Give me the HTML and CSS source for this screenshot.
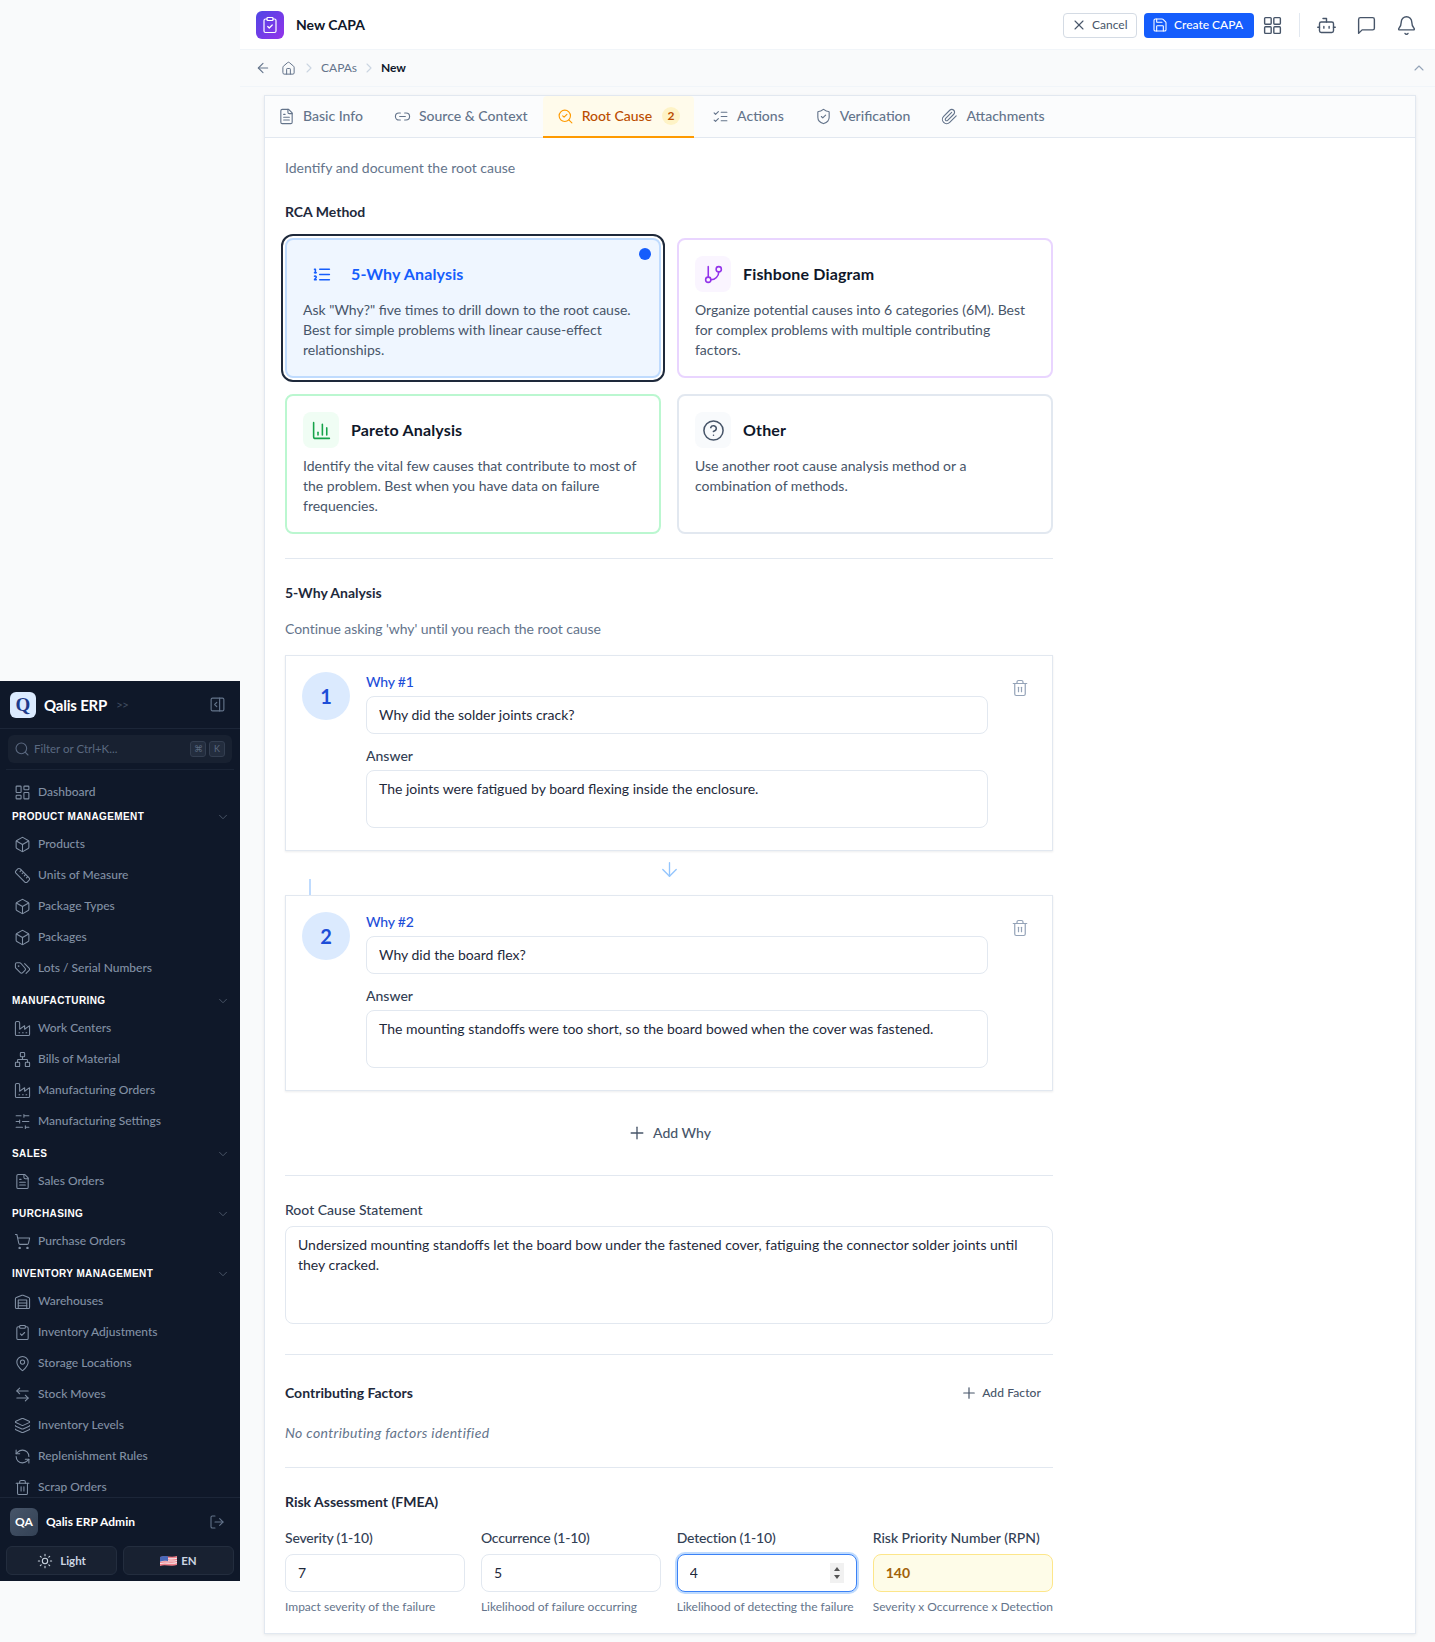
FILE: index.html
```html
<!DOCTYPE html>
<html lang="en">
<head>
<meta charset="UTF-8">
<meta name="viewport" content="width=device-width, initial-scale=1.0">
<title>New CAPA</title>
<link rel="stylesheet" href="styles.css">
</head>
<body>
<!-- icon sprite -->
<svg class="sprite" xmlns="http://www.w3.org/2000/svg">
  <symbol id="i-dashboard" viewBox="0 0 24 24"><rect x="3" y="3" width="7" height="9" rx="1"/><rect x="14" y="3" width="7" height="5" rx="1"/><rect x="14" y="12" width="7" height="9" rx="1"/><rect x="3" y="16" width="7" height="5" rx="1"/></symbol>
  <symbol id="i-box" viewBox="0 0 24 24"><path d="M21 8a2 2 0 0 0-1-1.73l-7-4a2 2 0 0 0-2 0l-7 4A2 2 0 0 0 3 8v8a2 2 0 0 0 1 1.73l7 4a2 2 0 0 0 2 0l7-4A2 2 0 0 0 21 16Z"/><path d="m3.3 7 8.7 5 8.7-5"/><path d="M12 22V12"/></symbol>
  <symbol id="i-ruler" viewBox="0 0 24 24"><path d="M21.3 15.3a2.4 2.4 0 0 1 0 3.4l-2.6 2.6a2.4 2.4 0 0 1-3.4 0L2.7 8.7a2.4 2.4 0 0 1 0-3.4l2.6-2.6a2.4 2.4 0 0 1 3.4 0Z"/><path d="m14.5 12.5 2-2"/><path d="m11.5 9.5 2-2"/><path d="m8.5 6.5 2-2"/><path d="m17.5 15.5 2-2"/></symbol>
  <symbol id="i-tags" viewBox="0 0 24 24"><path d="m15 5 6.3 6.3a2.4 2.4 0 0 1 0 3.4L17 19"/><path d="M9.6 4.6A2 2 0 0 0 8.2 4H4a2 2 0 0 0-2 2v4.2a2 2 0 0 0 .6 1.4l6.3 6.3a2.4 2.4 0 0 0 3.4 0l3.2-3.2a2.4 2.4 0 0 0 0-3.4Z"/><circle cx="6.5" cy="8.5" r=".5"/></symbol>
  <symbol id="i-factory" viewBox="0 0 24 24"><path d="M2 20a2 2 0 0 0 2 2h16a2 2 0 0 0 2-2V8l-7 5V8l-7 5V4a2 2 0 0 0-2-2H4a2 2 0 0 0-2 2Z"/><path d="M17 18h1"/><path d="M12 18h1"/><path d="M7 18h1"/></symbol>
  <symbol id="i-network" viewBox="0 0 24 24"><rect x="16" y="16" width="6" height="6" rx="1"/><rect x="2" y="16" width="6" height="6" rx="1"/><rect x="9" y="2" width="6" height="6" rx="1"/><path d="M5 16v-3a1 1 0 0 1 1-1h12a1 1 0 0 1 1 1v3"/><path d="M12 12V8"/></symbol>
  <symbol id="i-sliders" viewBox="0 0 24 24"><path d="M21 4h-7M10 4H3M21 12h-9M8 12H3M21 20h-5M12 20H3M14 2v4M8 10v4M16 18v4"/></symbol>
  <symbol id="i-file" viewBox="0 0 24 24"><path d="M15 2H6a2 2 0 0 0-2 2v16a2 2 0 0 0 2 2h12a2 2 0 0 0 2-2V7Z"/><path d="M14 2v4a2 2 0 0 0 2 2h4"/><path d="M10 9H8"/><path d="M16 13H8"/><path d="M16 17H8"/></symbol>
  <symbol id="i-cart" viewBox="0 0 24 24"><circle cx="8" cy="21" r="1"/><circle cx="19" cy="21" r="1"/><path d="M2.05 2.05h2l2.66 12.42a2 2 0 0 0 2 1.58h9.78a2 2 0 0 0 1.95-1.57l1.65-7.43H5.12"/></symbol>
  <symbol id="i-warehouse" viewBox="0 0 24 24"><path d="M22 8.35V20a2 2 0 0 1-2 2H4a2 2 0 0 1-2-2V8.35A2 2 0 0 1 3.26 6.5l8-3.2a2 2 0 0 1 1.48 0l8 3.2A2 2 0 0 1 22 8.35Z"/><path d="M6 18h12"/><path d="M6 14h12"/><rect x="6" y="10" width="12" height="12"/></symbol>
  <symbol id="i-clipcheck" viewBox="0 0 24 24"><rect x="8" y="2" width="8" height="4" rx="1"/><path d="M16 4h2a2 2 0 0 1 2 2v14a2 2 0 0 1-2 2H6a2 2 0 0 1-2-2V6a2 2 0 0 1 2-2h2"/><path d="m9 14 2 2 4-4"/></symbol>
  <symbol id="i-pin" viewBox="0 0 24 24"><path d="M20 10c0 5-5.5 10.2-7.4 11.8a1 1 0 0 1-1.2 0C9.5 20.2 4 15 4 10a8 8 0 0 1 16 0"/><circle cx="12" cy="10" r="3"/></symbol>
  <symbol id="i-swap" viewBox="0 0 24 24"><path d="M8 3 4 7l4 4"/><path d="M4 7h16"/><path d="m16 21 4-4-4-4"/><path d="M20 17H4"/></symbol>
  <symbol id="i-layers" viewBox="0 0 24 24"><path d="M12.83 2.18a2 2 0 0 0-1.66 0L2.6 6.08a1 1 0 0 0 0 1.83l8.58 3.91a2 2 0 0 0 1.66 0l8.58-3.9a1 1 0 0 0 0-1.83Z"/><path d="M2 12a1 1 0 0 0 .58.91l8.6 3.91a2 2 0 0 0 1.65 0l8.58-3.9A1 1 0 0 0 22 12"/><path d="M2 17a1 1 0 0 0 .58.91l8.6 3.91a2 2 0 0 0 1.65 0l8.58-3.9A1 1 0 0 0 22 17"/></symbol>
  <symbol id="i-refresh" viewBox="0 0 24 24"><path d="M21 12a9 9 0 0 0-9-9 9.75 9.75 0 0 0-6.74 2.74L3 8"/><path d="M3 3v5h5"/><path d="M3 12a9 9 0 0 0 9 9 9.75 9.75 0 0 0 6.74-2.74L21 16"/><path d="M16 16h5v5"/></symbol>
  <symbol id="i-trash" viewBox="0 0 24 24"><path d="M3 6h18"/><path d="M19 6v14a2 2 0 0 1-2 2H7a2 2 0 0 1-2-2V6"/><path d="M8 6V4a2 2 0 0 1 2-2h4a2 2 0 0 1 2 2v2"/><path d="M10 11v6"/><path d="M14 11v6"/></symbol>
  <symbol id="i-chev-down" viewBox="0 0 24 24"><path d="m6 9 6 6 6-6"/></symbol>
  <symbol id="i-chev-right" viewBox="0 0 24 24"><path d="m9 18 6-6-6-6"/></symbol>
  <symbol id="i-chev-up" viewBox="0 0 24 24"><path d="m18 15-6-6-6 6"/></symbol>
  <symbol id="i-search" viewBox="0 0 24 24"><circle cx="11" cy="11" r="8"/><path d="m21 21-4.3-4.3"/></symbol>
  <symbol id="i-panel" viewBox="0 0 24 24"><rect x="3" y="3" width="18" height="18" rx="2"/><path d="M15 3v18"/><path d="m10 15-3-3 3-3" transform="translate(1 0)"/></symbol>
  <symbol id="i-logout" viewBox="0 0 24 24"><path d="M9 21H5a2 2 0 0 1-2-2V5a2 2 0 0 1 2-2h4"/><path d="m16 17 5-5-5-5"/><path d="M21 12H9"/></symbol>
  <symbol id="i-sun" viewBox="0 0 24 24"><circle cx="12" cy="12" r="4"/><path d="M12 2v2M12 20v2M4.93 4.93l1.41 1.41M17.66 17.66l1.41 1.41M2 12h2M20 12h2M6.34 17.66l-1.41 1.41M19.07 4.93l-1.41 1.41"/></symbol>
  <symbol id="i-x" viewBox="0 0 24 24"><path d="M18 6 6 18"/><path d="m6 6 12 12"/></symbol>
  <symbol id="i-save" viewBox="0 0 24 24"><path d="M15.2 3a2 2 0 0 1 1.4.6l3.8 3.8a2 2 0 0 1 .6 1.4V19a2 2 0 0 1-2 2H5a2 2 0 0 1-2-2V5a2 2 0 0 1 2-2z"/><path d="M17 21v-7a1 1 0 0 0-1-1H8a1 1 0 0 0-1 1v7"/><path d="M7 3v4a1 1 0 0 0 1 1h7"/></symbol>
  <symbol id="i-grid" viewBox="0 0 24 24"><rect x="3" y="3" width="7.5" height="7.5" rx="1"/><rect x="13.5" y="3" width="7.5" height="7.5" rx="1"/><rect x="3" y="13.5" width="7.5" height="7.5" rx="1"/><rect x="13.5" y="13.5" width="7.5" height="7.5" rx="1"/></symbol>
  <symbol id="i-bot" viewBox="0 0 24 24"><path d="M12 8V4H8"/><rect x="4" y="8" width="16" height="12" rx="2"/><path d="M2 14h2M20 14h2M15 13v2M9 13v2"/></symbol>
  <symbol id="i-chat" viewBox="0 0 24 24"><path d="M21 15a2 2 0 0 1-2 2H7l-4 4V5a2 2 0 0 1 2-2h14a2 2 0 0 1 2 2z"/></symbol>
  <symbol id="i-bell" viewBox="0 0 24 24"><path d="M10.27 21a2 2 0 0 0 3.46 0"/><path d="M3.26 15.33A1 1 0 0 0 4 17h16a1 1 0 0 0 .74-1.67C19.41 13.96 18 12.5 18 8A6 6 0 0 0 6 8c0 4.5-1.41 5.96-2.74 7.33"/></symbol>
  <symbol id="i-back" viewBox="0 0 24 24"><path d="m12 19-7-7 7-7"/><path d="M19 12H5"/></symbol>
  <symbol id="i-home" viewBox="0 0 24 24"><path d="M15 21v-8a1 1 0 0 0-1-1h-4a1 1 0 0 0-1 1v8"/><path d="M3 10a2 2 0 0 1 .71-1.53l7-6a2 2 0 0 1 2.58 0l7 6A2 2 0 0 1 21 10v9a2 2 0 0 1-2 2H5a2 2 0 0 1-2-2z"/></symbol>
  <symbol id="i-link" viewBox="0 0 24 24"><path d="M9 17H7A5 5 0 0 1 7 7h2"/><path d="M15 7h2a5 5 0 1 1 0 10h-2"/><path d="M8 12h8"/></symbol>
  <symbol id="i-searchcheck" viewBox="0 0 24 24"><path d="m8 11 2 2 4-4"/><circle cx="11" cy="11" r="8"/><path d="m21 21-4.3-4.3"/></symbol>
  <symbol id="i-listcheck" viewBox="0 0 24 24"><path d="m3 17 2 2 4-4"/><path d="m3 7 2 2 4-4"/><path d="M13 6h8"/><path d="M13 12h8"/><path d="M13 18h8"/></symbol>
  <symbol id="i-shield" viewBox="0 0 24 24"><path d="M20 13c0 5-3.5 7.5-7.66 8.95a1 1 0 0 1-.67-.01C7.5 20.5 4 18 4 13V6a1 1 0 0 1 1-1c2 0 4.5-1.2 6.24-2.72a1.17 1.17 0 0 1 1.52 0C14.51 3.81 17 5 19 5a1 1 0 0 1 1 1z"/><path d="m9 12 2 2 4-4"/></symbol>
  <symbol id="i-clip" viewBox="0 0 24 24"><path d="m21.44 11.05-9.19 9.19a6 6 0 0 1-8.49-8.49l8.57-8.57A4 4 0 1 1 18 8.84l-8.59 8.57a2 2 0 0 1-2.83-2.83l8.49-8.48"/></symbol>
  <symbol id="i-listnum" viewBox="0 0 24 24"><path d="M10 12h11"/><path d="M10 18h11"/><path d="M10 6h11"/><path d="M4 10h2"/><path d="M4 6h1v4"/><path d="M6 18H4c0-1 2-2 2-3s-1-1.5-2-1"/></symbol>
  <symbol id="i-branch" viewBox="0 0 24 24"><path d="M6 3v12"/><circle cx="18" cy="6" r="3"/><circle cx="6" cy="18" r="3"/><path d="M18 9a9 9 0 0 1-9 9"/></symbol>
  <symbol id="i-chart" viewBox="0 0 24 24"><path d="M3 3v16a2 2 0 0 0 2 2h16"/><path d="M18 17V9"/><path d="M13 17V5"/><path d="M8 17v-3"/></symbol>
  <symbol id="i-help" viewBox="0 0 24 24"><circle cx="12" cy="12" r="10"/><path d="M9.09 9a3 3 0 0 1 5.83 1c0 2-3 3-3 3"/><path d="M12 17h.01"/></symbol>
  <symbol id="i-arrow-down" viewBox="0 0 24 24"><path d="M12 5v14"/><path d="m19 12-7 7-7-7"/></symbol>
  <symbol id="i-plus" viewBox="0 0 24 24"><path d="M5 12h14"/><path d="M12 5v14"/></symbol>
</svg>

<div class="app">
  <div class="rail">
    <aside class="sidebar">
      <div class="side-top">
        <span class="brand-mark">Q</span>
        <span class="brand-name">Qalis ERP</span>
        <span class="brand-more">&gt;&gt;</span>
        <svg class="ic side-collapse"><use href="#i-panel"/></svg>
      </div>
      <div class="side-search">
        <div class="filter">
          <svg class="ic filter-icon"><use href="#i-search"/></svg>
          <span class="filter-text">Filter or Ctrl+K...</span>
          <kbd>⌘</kbd><kbd>K</kbd>
        </div>
      </div>
      <nav class="side-nav">
        <a class="nav-item"><svg class="ic"><use href="#i-dashboard"/></svg>Dashboard</a>
        <div class="nav-group">
          <div class="nav-head">Product Management<svg class="ic"><use href="#i-chev-down"/></svg></div>
          <a class="nav-item"><svg class="ic"><use href="#i-box"/></svg>Products</a>
          <a class="nav-item"><svg class="ic"><use href="#i-ruler"/></svg>Units of Measure</a>
          <a class="nav-item"><svg class="ic"><use href="#i-box"/></svg>Package Types</a>
          <a class="nav-item"><svg class="ic"><use href="#i-box"/></svg>Packages</a>
          <a class="nav-item"><svg class="ic"><use href="#i-tags"/></svg>Lots / Serial Numbers</a>
        </div>
        <div class="nav-group">
          <div class="nav-head">Manufacturing<svg class="ic"><use href="#i-chev-down"/></svg></div>
          <a class="nav-item"><svg class="ic"><use href="#i-factory"/></svg>Work Centers</a>
          <a class="nav-item"><svg class="ic"><use href="#i-network"/></svg>Bills of Material</a>
          <a class="nav-item"><svg class="ic"><use href="#i-factory"/></svg>Manufacturing Orders</a>
          <a class="nav-item"><svg class="ic"><use href="#i-sliders"/></svg>Manufacturing Settings</a>
        </div>
        <div class="nav-group">
          <div class="nav-head">Sales<svg class="ic"><use href="#i-chev-down"/></svg></div>
          <a class="nav-item"><svg class="ic"><use href="#i-file"/></svg>Sales Orders</a>
        </div>
        <div class="nav-group">
          <div class="nav-head">Purchasing<svg class="ic"><use href="#i-chev-down"/></svg></div>
          <a class="nav-item"><svg class="ic"><use href="#i-cart"/></svg>Purchase Orders</a>
        </div>
        <div class="nav-group">
          <div class="nav-head">Inventory Management<svg class="ic"><use href="#i-chev-down"/></svg></div>
          <a class="nav-item"><svg class="ic"><use href="#i-warehouse"/></svg>Warehouses</a>
          <a class="nav-item"><svg class="ic"><use href="#i-clipcheck"/></svg>Inventory Adjustments</a>
          <a class="nav-item"><svg class="ic"><use href="#i-pin"/></svg>Storage Locations</a>
          <a class="nav-item"><svg class="ic"><use href="#i-swap"/></svg>Stock Moves</a>
          <a class="nav-item"><svg class="ic"><use href="#i-layers"/></svg>Inventory Levels</a>
          <a class="nav-item"><svg class="ic"><use href="#i-refresh"/></svg>Replenishment Rules</a>
          <a class="nav-item"><svg class="ic"><use href="#i-trash"/></svg>Scrap Orders</a>
        </div>
      </nav>
      <div class="side-foot">
        <div class="user-row">
          <span class="avatar">QA</span>
          <span class="user-name">Qalis ERP Admin</span>
          <svg class="ic user-out"><use href="#i-logout"/></svg>
        </div>
        <div class="foot-btns">
          <button class="foot-btn"><svg class="ic"><use href="#i-sun"/></svg>Light</button>
          <button class="foot-btn foot-btn-lang">
            <svg class="flag" viewBox="0 0 17 12"><path d="M0 2C5 0 11 3 17 1V10C11 12 5 9 0 11Z" fill="#ef7f8a"/><path d="M0 4.2C5 2.2 11 5.2 17 3.2M0 6.4C5 4.4 11 7.4 17 5.4M0 8.6C5 6.6 11 9.6 17 7.6" fill="none" stroke="#f5eded" stroke-width="1.1"/><path d="M0 2C3 .8 5.500 1 8 1.500V6.200C5.500 5.700 3 5.500 0 6.700Z" fill="#4a68b8"/></svg>EN
          </button>
        </div>
      </div>
    </aside>
  </div>

  <div class="main">
    <header class="topbar">
      <span class="page-mark"><svg class="ic"><use href="#i-clipcheck"/></svg></span>
      <span class="page-title">New CAPA</span>
      <div class="top-actions">
        <button class="btn btn-cancel"><svg class="ic"><use href="#i-x"/></svg>Cancel</button>
        <button class="btn btn-primary"><svg class="ic"><use href="#i-save"/></svg>Create CAPA</button>
        <svg class="ic top-icon top-grid"><use href="#i-grid"/></svg>
        <span class="top-sep"></span>
        <svg class="ic top-icon"><use href="#i-bot"/></svg>
        <svg class="ic top-icon"><use href="#i-chat"/></svg>
        <svg class="ic top-icon"><use href="#i-bell"/></svg>
      </div>
    </header>

    <div class="crumbs">
      <svg class="ic crumb-back"><use href="#i-back"/></svg>
      <svg class="ic crumb-home"><use href="#i-home"/></svg>
      <svg class="ic crumb-sep"><use href="#i-chev-right"/></svg>
      <span class="crumb">CAPAs</span>
      <svg class="ic crumb-sep"><use href="#i-chev-right"/></svg>
      <span class="crumb crumb-now">New</span>
      <svg class="ic crumb-up"><use href="#i-chev-up"/></svg>
    </div>

    <section class="sheet">
      <div class="tabs">
        <a class="tab"><svg class="ic"><use href="#i-file"/></svg>Basic Info</a>
        <a class="tab"><svg class="ic"><use href="#i-link"/></svg>Source &amp; Context</a>
        <a class="tab tab-active"><svg class="ic"><use href="#i-searchcheck"/></svg>Root Cause<span class="tab-count">2</span></a>
        <a class="tab"><svg class="ic"><use href="#i-listcheck"/></svg>Actions</a>
        <a class="tab"><svg class="ic"><use href="#i-shield"/></svg>Verification</a>
        <a class="tab"><svg class="ic"><use href="#i-clip"/></svg>Attachments</a>
      </div>

      <div class="form">
        <p class="muted intro">Identify and document the root cause</p>
        <h3 class="sec-title rca-title">RCA Method</h3>

        <div class="methods">
          <div class="method method-blue is-selected">
            <span class="method-dot"></span>
            <div class="method-head"><span class="method-icon"><svg class="ic"><use href="#i-listnum"/></svg></span><h4>5-Why Analysis</h4></div>
            <p>Ask "Why?" five times to drill down to the root cause. Best for simple problems with linear cause-effect relationships.</p>
          </div>
          <div class="method method-purple">
            <div class="method-head"><span class="method-icon"><svg class="ic"><use href="#i-branch"/></svg></span><h4>Fishbone Diagram</h4></div>
            <p>Organize potential causes into 6 categories (6M). Best for complex problems with multiple contributing factors.</p>
          </div>
          <div class="method method-green">
            <div class="method-head"><span class="method-icon"><svg class="ic"><use href="#i-chart"/></svg></span><h4>Pareto Analysis</h4></div>
            <p>Identify the vital few causes that contribute to most of the problem. Best when you have data on failure frequencies.</p>
          </div>
          <div class="method method-gray">
            <div class="method-head"><span class="method-icon"><svg class="ic"><use href="#i-help"/></svg></span><h4>Other</h4></div>
            <p>Use another root cause analysis method or a combination of methods.</p>
          </div>
        </div>

        <hr class="rule">
        <h3 class="sec-title why-title">5-Why Analysis</h3>
        <p class="muted why-sub">Continue asking 'why' until you reach the root cause</p>

        <div class="why">
          <span class="why-num">1</span>
          <div class="why-body">
            <label class="why-label">Why #1</label>
            <input class="field" type="text" value="Why did the solder joints crack?">
            <label class="field-label why-answer">Answer</label>
            <textarea class="field why-area">The joints were fatigued by board flexing inside the enclosure.</textarea>
          </div>
          <button class="why-del"><svg class="ic"><use href="#i-trash"/></svg></button>
        </div>
        <div class="why-link">
          <span class="why-tail"></span>
          <svg class="ic"><use href="#i-arrow-down"/></svg>
        </div>
        <div class="why">
          <span class="why-num">2</span>
          <div class="why-body">
            <label class="why-label">Why #2</label>
            <input class="field" type="text" value="Why did the board flex?">
            <label class="field-label why-answer">Answer</label>
            <textarea class="field why-area">The mounting standoffs were too short, so the board bowed when the cover was fastened.</textarea>
          </div>
          <button class="why-del"><svg class="ic"><use href="#i-trash"/></svg></button>
        </div>

        <div class="add-why"><button class="ghost"><svg class="ic"><use href="#i-plus"/></svg>Add Why</button></div>
        <hr class="rule">

        <label class="field-label root-label">Root Cause Statement</label>
        <textarea class="field root-area">Undersized mounting standoffs let the board bow under the fastened cover, fatiguing the connector solder joints until they cracked.</textarea>
        <hr class="rule root-rule">

        <div class="factor-row">
          <h3 class="sec-title">Contributing Factors</h3>
          <button class="ghost ghost-sm"><svg class="ic"><use href="#i-plus"/></svg>Add Factor</button>
        </div>
        <p class="muted factor-none">No contributing factors identified</p>
        <hr class="rule">

        <h3 class="sec-title risk-title">Risk Assessment (FMEA)</h3>
        <div class="risk">
          <div>
            <label class="field-label">Severity (1-10)</label>
            <input class="field" type="text" value="7">
            <p class="hint">Impact severity of the failure</p>
          </div>
          <div>
            <label class="field-label">Occurrence (1-10)</label>
            <input class="field" type="text" value="5">
            <p class="hint">Likelihood of failure occurring</p>
          </div>
          <div>
            <label class="field-label">Detection (1-10)</label>
            <div class="spin-wrap">
              <input class="field is-focus" type="text" value="4">
              <span class="spin"><i class="spin-up"></i><i class="spin-down"></i></span>
            </div>
            <p class="hint">Likelihood of detecting the failure</p>
          </div>
          <div>
            <label class="field-label field-label-rpn">Risk Priority Number (RPN)</label>
            <input class="field field-rpn" type="text" value="140" readonly>
            <p class="hint">Severity x Occurrence x Detection</p>
          </div>
        </div>
      </div>
    </section>
  </div>
</div>
</body>
</html>
```

FILE: styles.css
```css
* {
  box-sizing: border-box;
}
html, body {
  height: 1642px;
  overflow: hidden;
}
body {
  margin: 0;
  font-family: Lato, "Noto Sans", sans-serif;
  font-size: 14px;
  line-height: 20px;
  color: #1e293b;
  background-color: #f9fafb;
}
h3, h4, p {
  margin: 0;
}
button {
  font: inherit;
  cursor: pointer;
}
.sprite {
  display: none;
}
.ic {
  width: 16px;
  height: 16px;
  flex: none;
  fill: none;
  stroke: currentColor;
  stroke-width: 1.6;
  stroke-linecap: round;
  stroke-linejoin: round;
}
.app {
  display: flex;
}
.rail {
  width: 240px;
  flex: none;
  padding-top: 681px;
}

/* sidebar */
.sidebar {
  height: 900px;
  display: flex;
  flex-direction: column;
  background-color: #0f1829;
  color: #8290a4;
}
.side-top {
  height: 48px;
  flex: none;
  display: flex;
  align-items: center;
  padding: 0 14px 0 10px;
  border-bottom: 1px solid #1c2638;
}
.brand-mark {
  width: 26px;
  height: 26px;
  display: flex;
  align-items: center;
  justify-content: center;
  border-radius: 6px;
  background-color: #dbeafe;
  color: #1e3a8a;
  font-family: "Liberation Serif", serif;
  font-size: 19px;
  font-weight: 700;
}
.brand-name {
  margin-left: 8px;
  color: #fff;
  font-size: 15px;
  font-weight: 700;
  letter-spacing: -0.2px;
}
.brand-more {
  margin-left: 9px;
  color: #3f4b5e;
  font-size: 12px;
  letter-spacing: -1px;
}
.side-collapse {
  margin-left: auto;
  width: 17px;
  height: 17px;
  color: #64748b;
}
.side-search {
  flex: none;
  margin: 0 6px;
  padding: 6px 2px;
  border-bottom: 1px solid #1a2436;
}
.filter {
  height: 28px;
  display: flex;
  align-items: center;
  gap: 3px;
  padding: 0 7px 0 6px;
  border-radius: 6px;
  background-color: #182131;
  font-size: 11.500px;
  color: #5b6980;
}
.filter-icon {
  margin-right: 1px;
}
.filter-text {
  flex: 1;
}
kbd {
  width: 16px;
  height: 16px;
  display: flex;
  align-items: center;
  justify-content: center;
  border: 1px solid #333e50;
  border-radius: 3px;
  background-color: #232d3e;
  font-family: inherit;
  font-size: 9px;
}
.side-nav {
  flex: 1;
  min-height: 0;
  overflow: hidden;
  padding-top: 7px;
}
.nav-item {
  height: 31px;
  display: flex;
  align-items: center;
  gap: 7.500px;
  padding: 0 0 1px 13.500px;
  font-size: 12px;
  font-weight: 500;
}
.nav-item .ic {
  width: 17px;
  height: 17px;
  stroke-width: 1.5;
}
.nav-group {
  margin-top: 4px;
}
.nav-item + .nav-group {
  margin-top: -4px;
}
.nav-head {
  height: 25px;
  display: flex;
  align-items: center;
  justify-content: space-between;
  padding: 0 10px 0 12px;
  color: #fff;
  font-family: "Liberation Sans", sans-serif;
  font-size: 10px;
  font-weight: 700;
  letter-spacing: 0.4px;
  text-transform: uppercase;
}
.nav-head .ic {
  width: 14px;
  height: 14px;
  color: #4b5769;
}
.side-foot {
  flex: none;
  border-top: 1px solid #1c2638;
  padding: 10px 6px 6px;
}
.user-row {
  display: flex;
  align-items: center;
  padding: 0 9px 0 4px;
}
.avatar {
  width: 28px;
  height: 28px;
  display: flex;
  align-items: center;
  justify-content: center;
  border-radius: 6px;
  background: linear-gradient(135deg, #475569, #334155);
  color: #fff;
  font-size: 12px;
  font-weight: 700;
}
.user-name {
  margin-left: 8px;
  color: #fff;
  font-size: 12px;
  font-weight: 700;
}
.user-out {
  margin-left: auto;
  color: #64748b;
}
.foot-btns {
  display: flex;
  gap: 6px;
  margin-top: 10px;
}
.foot-btn {
  flex: 1;
  height: 29px;
  display: flex;
  align-items: center;
  justify-content: center;
  gap: 7px;
  border: 1px solid #232d3e;
  border-radius: 6px;
  background-color: #182131;
  color: #cbd5e1;
  font-size: 11.500px;
  font-weight: 700;
}
.foot-btn-lang {
  gap: 4px;
}
.flag {
  width: 17px;
  height: 12px;
}

/* header */
.main {
  flex: 1;
  min-width: 0;
}
.topbar {
  height: 50px;
  display: flex;
  align-items: center;
  padding: 1px 18px 0 16px;
  background-color: #fff;
  border-bottom: 1px solid #f1f5f9;
}
.page-mark {
  width: 28px;
  height: 28px;
  display: flex;
  align-items: center;
  justify-content: center;
  border-radius: 6px;
  background: linear-gradient(135deg, #4f46e5, #9333ea);
  color: #fff;
}
.page-mark .ic {
  width: 18px;
  height: 18px;
}
.page-title {
  margin-left: 12px;
  color: #0f172a;
  font-size: 14px;
  font-weight: 700;
}
.top-actions {
  margin-left: auto;
  display: flex;
  align-items: center;
}
.btn {
  height: 25px;
  display: flex;
  align-items: center;
  border-radius: 4px;
  font-size: 12px;
}
.btn-cancel {
  width: 74px;
  gap: 5px;
  padding: 0 0 0 7px;
  border: 1px solid #d4dbe4;
  background-color: #fff;
  color: #475569;
}
.btn-primary {
  width: 110px;
  gap: 6px;
  margin-left: 7px;
  padding: 0 0 0 8px;
  border: 0;
  background-color: #155dfc;
  color: #fff;
  font-weight: 500;
}
.top-icon {
  width: 21px;
  height: 21px;
  margin-left: 19px;
  color: #475569;
}
.top-grid {
  margin-left: 8px;
  margin-right: 1px;
}
.top-sep {
  width: 1px;
  height: 24px;
  margin: 0 0 0 15px;
  background-color: #e2e8f0;
}
.top-sep + .top-icon {
  margin-left: 16px;
}
.crumbs {
  height: 37px;
  display: flex;
  align-items: center;
  padding: 0 8px 0 15px;
  border-bottom: 1px solid #f1f5f9;
  background-color: #f9fafb;
  color: #64748b;
  font-size: 12px;
}
.crumb-home {
  width: 15px;
  height: 15px;
  margin-left: 10px;
}
.crumb-sep {
  margin: 0 4px 0 5px;
  color: #cbd5e1;
}
.crumb + .crumb-sep {
  margin: 0 4px;
}
.crumb-now {
  color: #0f172a;
  font-weight: 700;
  letter-spacing: -0.1px;
}
.crumb-up {
  margin-left: auto;
  color: #94a3b8;
}

/* main card */
.sheet {
  width: 1152px;
  height: 1539px;
  margin: 8px 0 0 24px;
  border: 1px solid #e2e8f0;
  background-color: #fff;
  box-shadow: 0 1px 3px rgba(15, 23, 42, 0.08);
}
.tabs {
  height: 42px;
  display: flex;
  background-color: #fbfcfd;
  box-shadow: inset 0 -1px 0 #e2e8f0;
}
.tab {
  display: flex;
  align-items: center;
  gap: 8px;
  padding: 0 18px 2px 13px;
  color: #64748b;
  font-weight: 500;
}
.tab .ic {
  width: 17px;
  height: 17px;
}
.tab-active {
  margin: 0 5px 0 -3px;
  padding: 0 14px;
  border-bottom: 2px solid #fe9a00;
  border-radius: 4px 4px 0 0;
  background-color: #fffbeb;
  color: #bb4d00;
}
.tab-active .ic {
  color: #fe9a00;
}
.tab-count {
  width: 18px;
  height: 18px;
  margin-left: 2px;
  display: flex;
  align-items: center;
  justify-content: center;
  border-radius: 50%;
  background-color: #fef3c6;
  font-size: 12px;
  font-weight: 700;
}
.form {
  width: 788px;
  padding: 20px 0 0 20px;
}
.muted {
  color: #64748b;
}
.sec-title {
  color: #1e293b;
  font-size: 14px;
  font-weight: 700;
}
.rca-title {
  margin-top: 24px;
}
.methods {
  display: grid;
  grid-template-columns: 1fr 1fr;
  gap: 16px;
  margin-top: 16px;
}
.method {
  position: relative;
  height: 140px;
  padding: 16px;
  border: 2px solid #e2e8f0;
  border-radius: 8px;
  background-color: #fff;
}
.method p {
  margin-top: 8px;
  color: #475569;
}
.method-head {
  display: flex;
  align-items: center;
  gap: 12px;
}
.method-head h4 {
  color: #0f172a;
  font-size: 16px;
  font-weight: 700;
  letter-spacing: 0.15px;
}
.method-icon {
  width: 36px;
  height: 36px;
  display: flex;
  align-items: center;
  justify-content: center;
  border-radius: 8px;
}
.method-icon .ic {
  width: 21px;
  height: 21px;
  stroke-width: 1.8;
}
.method-blue {
  border-color: #bfdbfe;
  background-color: #eff6ff;
}
.method-blue .method-icon,
.method-blue h4 {
  color: #155dfc;
}
.is-selected {
  outline: 2px solid #1e293b;
  outline-offset: 2px;
}
.method-dot {
  position: absolute;
  top: 8px;
  right: 8px;
  width: 12px;
  height: 12px;
  border-radius: 50%;
  background-color: #155dfc;
}
.method-purple {
  border-color: #e9d5ff;
}
.method-purple .method-icon {
  background-color: #faf5ff;
  color: #9333ea;
}
.method-green {
  border-color: #bbf7d0;
}
.method-green .method-icon {
  background-color: #f0fdf4;
  color: #16a34a;
}
.method-gray .method-icon {
  background-color: #f8fafc;
  color: #475569;
}
.method-gray .method-icon .ic {
  width: 23px;
  height: 23px;
  stroke-width: 1.6;
}
.rule {
  height: 1px;
  margin: 24px 0 0;
  border: 0;
  background-color: #e2e8f0;
}
.why-title {
  margin-top: 24px;
}
.why-sub {
  margin-top: 16px;
  margin-bottom: 16px;
  letter-spacing: -0.06px;
}
.why {
  display: flex;
  gap: 16px;
  padding: 16px 16px 22px;
  border: 1px solid #e2e8f0;
  background-color: #fff;
  box-shadow: 0 1px 2px rgba(15, 23, 42, 0.08);
}
.why-num {
  width: 48px;
  height: 48px;
  flex: none;
  display: flex;
  align-items: center;
  justify-content: center;
  border-radius: 50%;
  background-color: #dbeafe;
  color: #1d4ed8;
  font-size: 20px;
  font-weight: 700;
}
.why-body {
  flex: 1;
  min-width: 0;
}
.why-label {
  display: block;
  margin-bottom: 4px;
  color: #1d4ed8;
  font-weight: 500;
  letter-spacing: -0.2px;
}
.field-label {
  display: block;
  margin-bottom: 6px;
  color: #334155;
  font-weight: 500;
}
.risk .field-label {
  letter-spacing: -0.2px;
}
.risk .field-label-rpn {
  letter-spacing: 0;
}
.why-answer {
  margin-top: 12px;
  margin-bottom: 4px;
}
.field {
  display: block;
  width: 100%;
  height: 38px;
  padding: 0 12px 2px;
  border: 1px solid #e2e8f0;
  border-radius: 8px;
  outline: none;
  background-color: #fff;
  color: #1e293b;
  font: inherit;
}
textarea.field {
  padding-top: 8px;
  padding-bottom: 8px;
  resize: none;
}
.why-area {
  height: 58px;
}
.why-del {
  width: 32px;
  height: 32px;
  flex: none;
  display: flex;
  align-items: center;
  justify-content: center;
  padding: 0;
  border: 0;
  background: none;
  color: #94a3b8;
}
.why-del .ic {
  width: 18px;
  height: 18px;
}
.why-link {
  position: relative;
  height: 44px;
  display: flex;
  align-items: center;
  justify-content: center;
  padding-bottom: 8px;
  color: #93c5fd;
}
.why-link .ic {
  width: 23px;
  height: 23px;
  stroke-width: 1.4;
}
.why-tail {
  position: absolute;
  left: 24px;
  bottom: 0;
  width: 2px;
  height: 16px;
  background-color: #bfdbfe;
}
.add-why {
  display: flex;
  justify-content: center;
  margin-top: 24px;
}
.ghost {
  height: 36px;
  display: flex;
  align-items: center;
  gap: 6px;
  padding: 0 12px;
  border: 0;
  background: none;
  color: #475569;
  font-weight: 500;
}
.ghost .ic {
  width: 20px;
  height: 20px;
}
.ghost-sm {
  height: 24px;
  gap: 4px;
  padding: 0 12px;
  font-size: 12px;
  letter-spacing: 0.1px;
}
.ghost-sm .ic {
  width: 18px;
  height: 18px;
}
.root-label {
  margin-top: 24px;
}
.root-area {
  height: 98px;
}
.root-rule {
  margin-top: 30px;
}
.factor-row {
  display: flex;
  align-items: center;
  justify-content: space-between;
  height: 20px;
  margin-top: 28px;
}
.factor-none {
  margin-top: 20px;
  font-style: italic;
  letter-spacing: 0.35px;
}
.risk-title {
  margin-top: 24px;
}
.risk {
  display: grid;
  grid-template-columns: repeat(4, 1fr);
  gap: 16px;
  margin-top: 16px;
}
.hint {
  margin-top: 7px;
  color: #64748b;
  font-size: 12px;
  line-height: 16px;
  white-space: nowrap;
}
.spin-wrap {
  position: relative;
}
.is-focus {
  border-color: #3b82f6;
  box-shadow: 0 0 0 2px #bfdbfe;
}
.spin {
  position: absolute;
  top: 9px;
  right: 13px;
  width: 14px;
  height: 20px;
  display: flex;
  flex-direction: column;
  align-items: center;
  justify-content: center;
  gap: 4px;
  background-color: #f1f1f1;
}
.spin-up, .spin-down {
  width: 0;
  height: 0;
  border-left: 3px solid transparent;
  border-right: 3px solid transparent;
}
.spin-up {
  border-bottom: 4px solid #555;
}
.spin-down {
  border-top: 4px solid #555;
}
.field-rpn {
  border-color: #fde68a;
  background-color: #fefce8;
  color: #a16207;
  font-weight: 700;
}
```
